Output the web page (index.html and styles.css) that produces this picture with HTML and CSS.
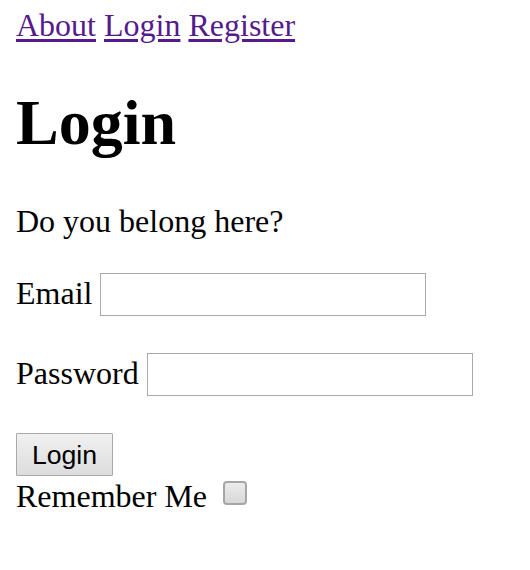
FILE: index.html
```html
<!DOCTYPE html>
<html>
<head>
<meta charset="utf-8">
<title>Login</title>
<link rel="stylesheet" href="styles.css">
</head>
<body>
<nav class="nav"><a href="#">About</a> <a href="#">Login</a> <a href="#">Register</a></nav>
<h1 class="title">Login</h1>
<p class="intro">Do you belong here?</p>
<form class="form">
  <div class="row"><label class="label" for="email">Email</label><input class="field" id="email" type="text"></div>
  <div class="row row-last"><label class="label" for="pw">Password</label><input class="field" id="pw" type="password"></div>
  <div class="actions">
    <button class="btn" type="button">Login</button>
    <div class="remember"><span>Remember Me</span><span class="check"></span></div>
  </div>
</form>
</body>
</html>
```
FILE: styles.css
```css
html, body { background: #fff; }
body {
  margin: 0;
  padding: 7px 16px 0;
  font-family: "Liberation Serif", "Times New Roman", serif;
  font-size: 32px;
  color: #000;
}
.nav a { color: #551a8b; text-decoration: underline; text-underline-offset: 3px; }
.title {
  font-size: 64px;
  font-weight: bold;
  margin: 42px 0 43px;
  line-height: normal;
}
.intro { margin: 0 0 30px; }
.form { margin: 0; }
.row {
  display: flex;
  align-items: center;
  gap: 8px;
  height: 48px;
  margin-bottom: 32px;
}
.row-last { margin-bottom: 35px; }
.label { padding-bottom: 2px; }
.field {
  box-sizing: border-box;
  width: 326px;
  height: 43px;
  border: 1px solid #a9a9a9;
  margin: 0;
  padding: 2px 4px;
  font: 26.67px "Liberation Sans", Arial, sans-serif;
  background: #fff;
}
.actions { display: flex; flex-direction: column; align-items: flex-start; }
.btn {
  box-sizing: border-box;
  width: 97px;
  height: 43px;
  margin: 0;
  padding: 2px 0 0;
  border: 1px solid #a9a9a9;
  border-radius: 1px;
  background: linear-gradient(#f1f1f1, #dcdcdc);
  font: 26.67px "Liberation Sans", Arial, sans-serif;
  color: #000;
}
.remember { display: flex; align-items: center; line-height: 37px; margin-top: 2px; }
.check {
  box-sizing: border-box;
  width: 24px;
  height: 24px;
  margin: 0 0 8px 16px;
  border: 2px solid #a6a6a6;
  border-radius: 4px;
  background: linear-gradient(#ececec, #d8d8d8);
}
```
